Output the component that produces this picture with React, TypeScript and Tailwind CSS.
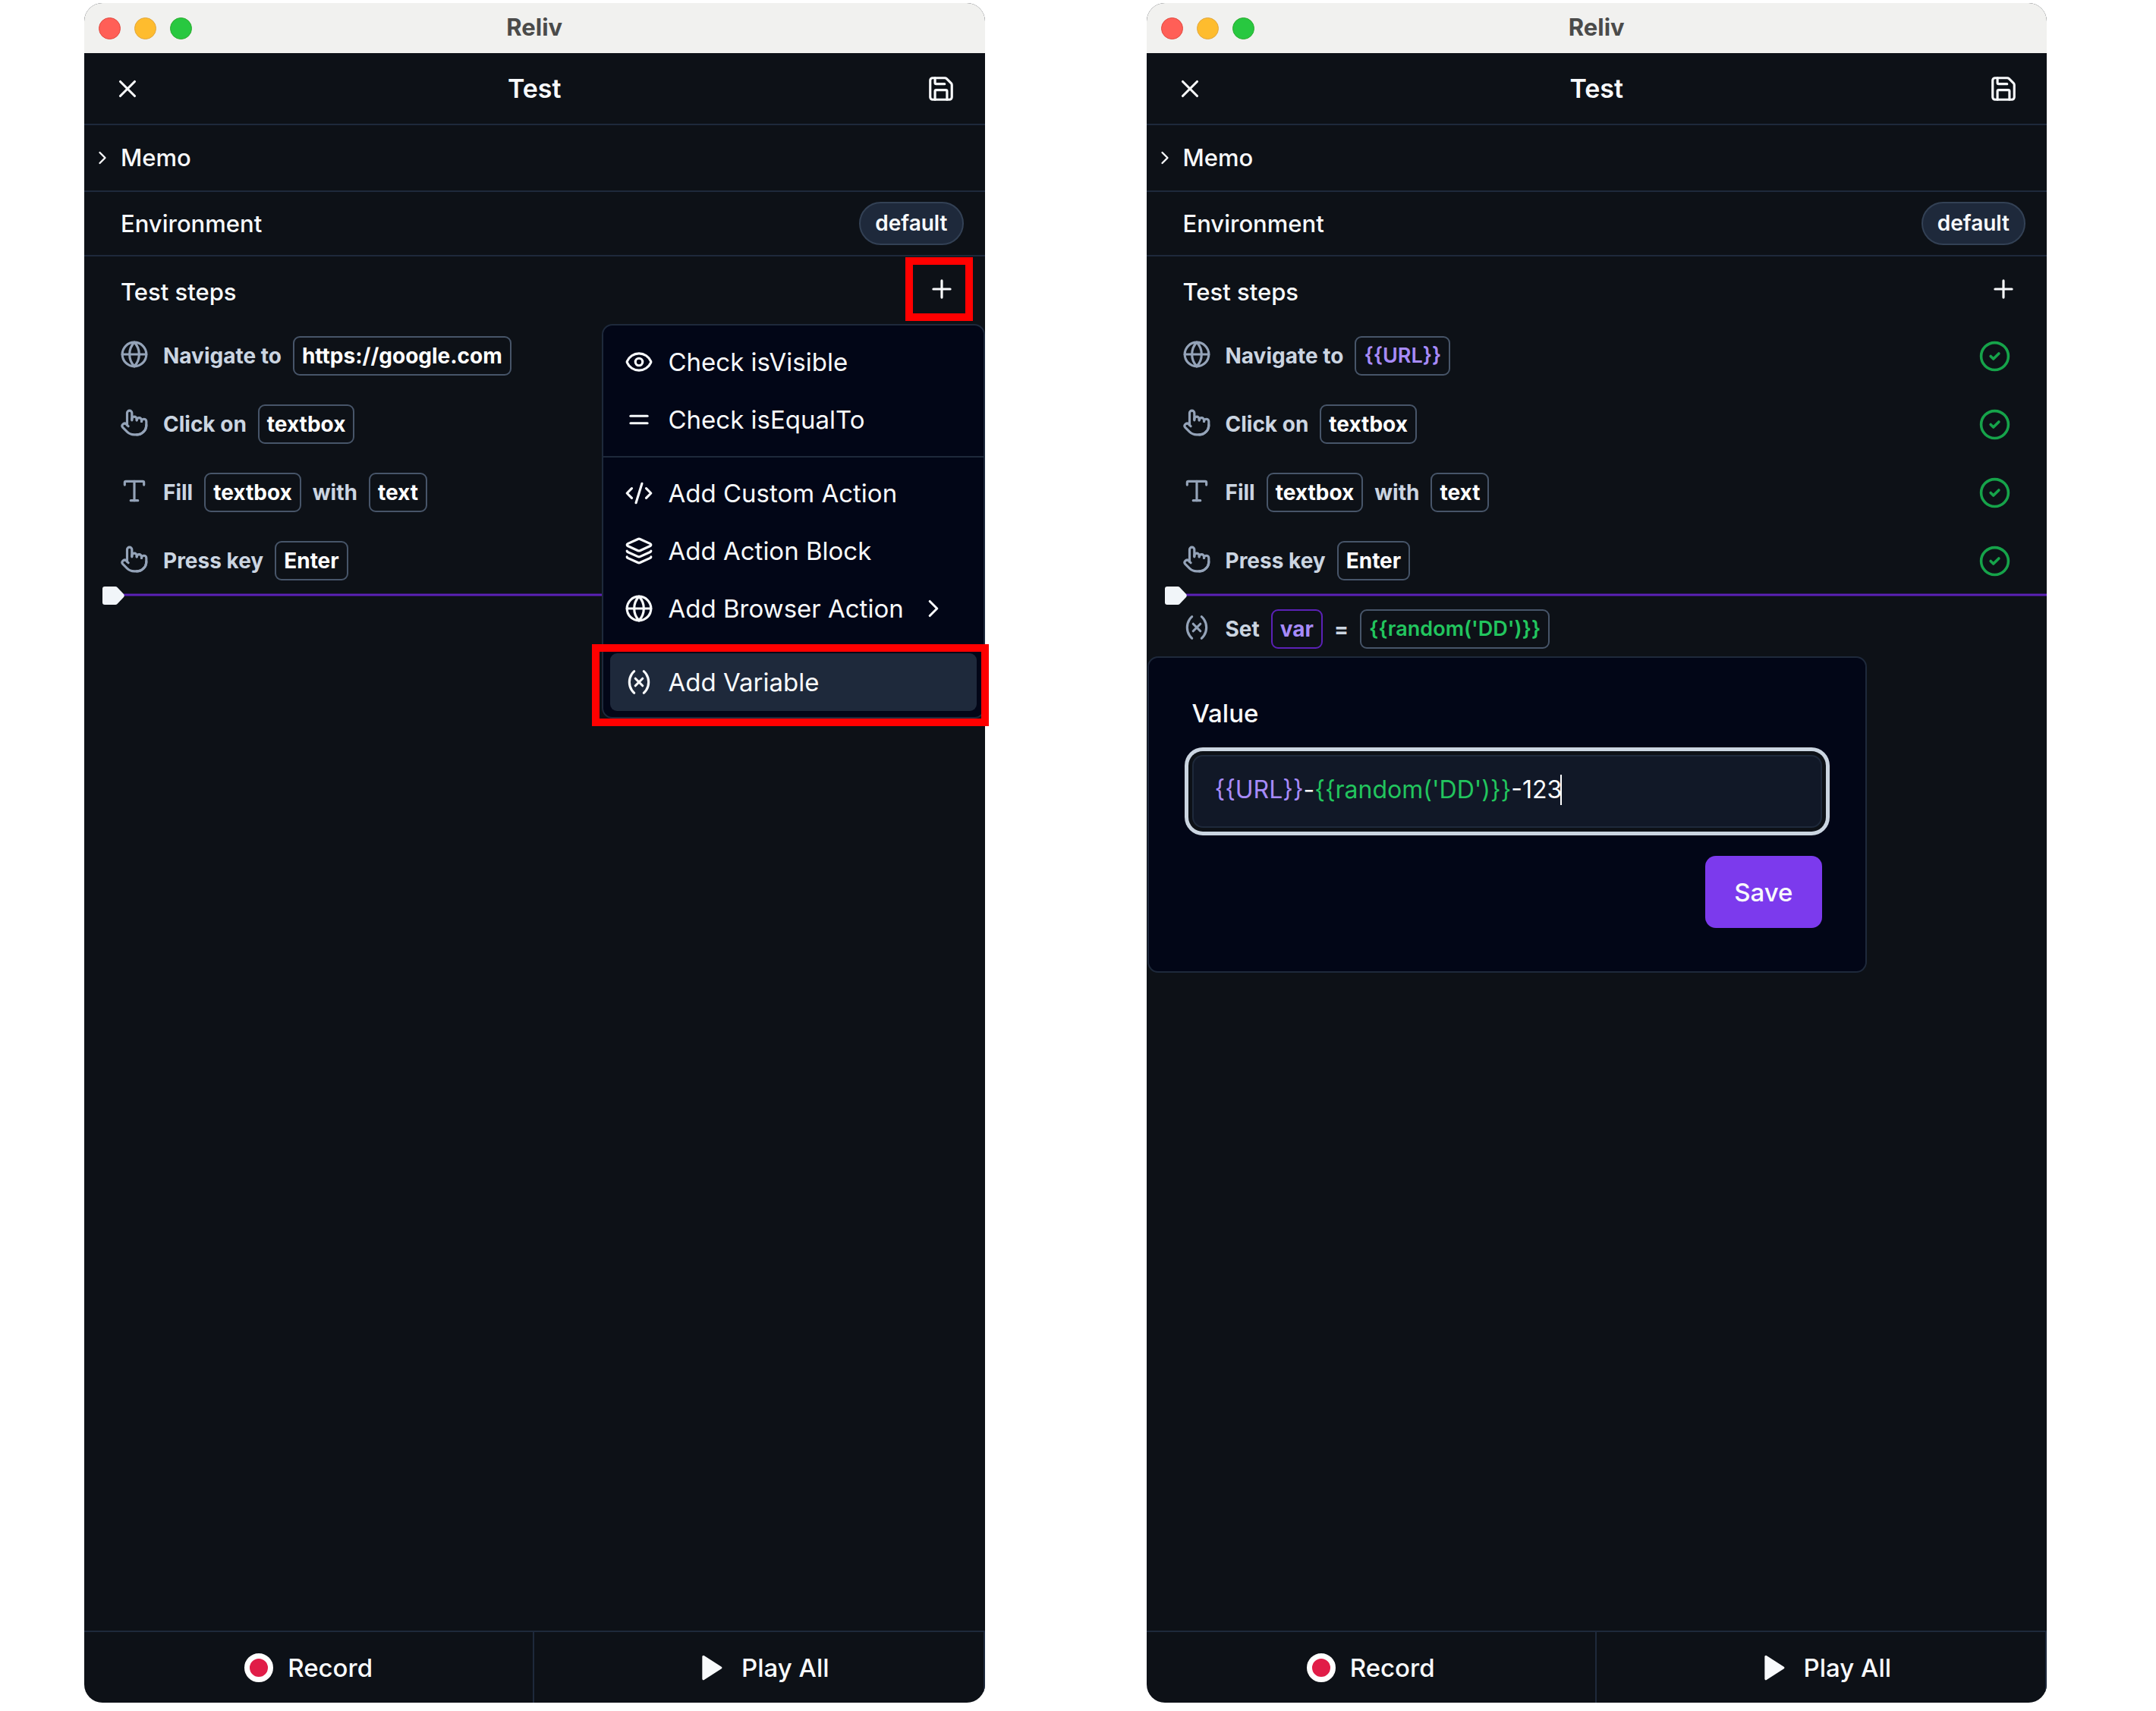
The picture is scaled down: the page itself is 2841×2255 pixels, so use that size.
import React, { useState } from "react";
import {
  X,
  Save,
  ChevronRight,
  Plus,
  Globe,
  Pointer,
  Type,
  Variable,
  CircleCheck,
  Eye,
  Equal,
  CodeXml,
  Layers,
} from "lucide-react";

const ICON = "size-[38px] shrink-0";

function TitleBar() {
  return (
    <div className="relative flex h-[66px] items-center justify-center rounded-t-[24px] bg-[#f1f1ef] pb-0.5">
      <div className="absolute inset-y-0 left-[19px] flex items-center gap-[18px]">
        <span className="size-[29px] rounded-full border border-[#e24b41] bg-[#ff5f57]" />
        <span className="size-[29px] rounded-full border border-[#e1a73e] bg-[#febc2e]" />
        <span className="size-[29px] rounded-full border border-[#2dac2f] bg-[#28c840]" />
      </div>
      <span className="text-[31px] leading-[40px] font-bold text-[#4b4b4a]">Reliv</span>
    </div>
  );
}

function Header() {
  return (
    <header className="flex h-[95px] items-center justify-between border-b-2 border-[#1e293b] px-[38px]">
      <button type="button" aria-label="Close">
        <X className={ICON} />
      </button>
      <h1 className="text-[34px] leading-[48px] font-semibold">Test</h1>
      <button type="button" aria-label="Save test">
        <Save className={ICON} />
      </button>
    </header>
  );
}

const PLAIN_CHIP = "border-[#475569] text-[28px] font-bold text-white";

function Chip({ children, className = PLAIN_CHIP }: { children: React.ReactNode; className?: string }) {
  return (
    <button type="button" className={"h-[52px] rounded-[9px] border-2 px-[10px] leading-[40px] " + className}>
      {children}
    </button>
  );
}

function Step({ icon, children, passed }: { icon: React.ReactNode; children: React.ReactNode; passed?: boolean }) {
  return (
    <li className="flex h-[90px] items-center px-[47px] text-[#cbd5e1]">
      <span className="mr-[19px] mb-1 text-[#94a3b8]">{icon}</span>
      <div className="flex items-center gap-[15px] text-[28px] leading-[40px] font-bold">{children}</div>
      {passed && <CircleCheck aria-label="Passed" className="ml-auto size-[43px] text-[#16a34a]" />}
    </li>
  );
}

function Marker() {
  return (
    <div className="relative h-0">
      <div className="absolute right-0 left-[40px] h-[3px] -translate-y-1/2 bg-[#5b21b6]" />
      <svg className="absolute top-[-11px] left-[24px] h-[24px] w-[29px] text-[#f1f5f9]" viewBox="0 0 29 24" fill="currentColor">
        <path d="M3 0h14q1.500 0 2.500 1l8.500 9q1.500 2 0 4l-8.500 9Q18.500 24 17 24H3q-3 0-3-3V3q0-3 3-3z" />
      </svg>
    </div>
  );
}

function Steps({ url, passed, children }: { url: React.ReactNode; passed?: boolean; children?: React.ReactNode }) {
  return (
    <ul>
      <Step passed={passed} icon={<Globe className={ICON} />}>
        <span>Navigate to</span>
        {url}
      </Step>
      <Step passed={passed} icon={<Pointer className={ICON} />}>
        <span>Click on</span>
        <Chip>textbox</Chip>
      </Step>
      <Step passed={passed} icon={<Type className={ICON} />}>
        <span>Fill</span>
        <Chip>textbox</Chip>
        <span>with</span>
        <Chip>text</Chip>
      </Step>
      <Step passed={passed} icon={<Pointer className={ICON} />}>
        <span>Press key</span>
        <Chip>Enter</Chip>
      </Step>
      <li>
        <Marker />
      </li>
      {children}
    </ul>
  );
}

function MenuItem({ icon, label, active, more }: { icon: React.ReactNode; label: string; active?: boolean; more?: boolean }) {
  return (
    <button
      type="button"
      role="menuitem"
      className={"flex h-[76px] w-full items-center rounded-[9px] px-[19px] " + (active ? "bg-[#1e293b]" : "")}
    >
      {icon}
      <span className="ml-[20px] text-[33px] leading-[48px]">{label}</span>
      {more && <ChevronRight className={ICON + " ml-[20px]"} />}
    </button>
  );
}

function AddMenu() {
  return (
    <div
      role="menu"
      className="absolute top-[89px] right-0 w-[505px] rounded-[14px] border-2 border-[#1e293b] bg-[#020617] px-[9px] pt-[10px] pb-[8px]"
    >
      <MenuItem icon={<Eye className={ICON} />} label="Check isVisible" />
      <MenuItem icon={<Equal className={ICON} />} label="Check isEqualTo" />
      <hr className="-mx-[9px] mt-[10px] mb-[9px] border-t-2 border-[#1e293b]" />
      <MenuItem icon={<CodeXml className={ICON} />} label="Add Custom Action" />
      <MenuItem icon={<Layers className={ICON} />} label="Add Action Block" />
      <MenuItem icon={<Globe className={ICON} />} label="Add Browser Action" more />
      <hr className="-mx-[9px] mt-[10px] mb-[9px] border-t-2 border-[#1e293b]" />
      <MenuItem icon={<Variable className={ICON} />} label="Add Variable" active />
      <div className="pointer-events-none absolute right-[-7px] bottom-[-12px] left-[-15px] h-[108px] border-[10px] border-[#ff0000]" />
    </div>
  );
}

function ValueEditor() {
  const [value, setValue] = useState("{{URL}}-{{random('DD')}}-123");
  const parts = value.split(/(\{\{.*?\}\})/).filter(Boolean);
  return (
    <form className="absolute top-[527px] left-px w-[948px] rounded-[14px] border-2 border-[#1e293b] bg-[#020617] px-[57px] pt-[45px] pb-[57px]">
      <label htmlFor="variable-value" className="block text-[33px] leading-[56px] font-medium">
        Value
      </label>
      <div className="mt-[27px] grid h-[96px] items-center rounded-[14px] border-2 border-[#1e293b] bg-[#111827] text-[32px] leading-[40px] ring-[5px] ring-[#cbd5e1] ring-offset-[5px] ring-offset-[#0d1117]">
        <div aria-hidden="true" className="col-start-1 row-start-1 flex px-[28px] pb-1 whitespace-pre">
          {parts.map((part, i) => (
            <span
              key={i}
              className={part.startsWith("{{random") ? "text-[#22c55e]" : part.startsWith("{{") ? "text-[#a78bfa]" : "text-white"}
            >
              {part}
            </span>
          ))}
          <span className="-ml-0.5 w-0.5 bg-white" />
        </div>
        <input
          id="variable-value"
          type="text"
          value={value}
          onChange={(e) => setValue(e.target.value)}
          className="col-start-1 row-start-1 w-full bg-transparent px-[28px] pb-1 text-transparent caret-transparent outline-none"
        />
      </div>
      <div className="mt-[37px] flex justify-end">
        <button type="button" className="h-[95px] rounded-[14px] bg-[#7c3aed] px-[38px] text-[33px] leading-[48px] font-medium">
          Save
        </button>
      </div>
    </form>
  );
}

function Footer() {
  return (
    <footer className="mt-auto grid h-[95px] grid-cols-2 overflow-hidden rounded-b-[24px] border-t-2 border-[#1e293b] text-[33px] leading-[48px] font-medium">
      <button type="button" className="flex items-center justify-center gap-[19px] border-r-2 border-[#1e293b]">
        <span className="size-[38px] rounded-full border-[7px] border-white bg-[#e11d48]" />
        Record
      </button>
      <button type="button" className="flex items-center justify-center gap-[20px] border-r-2 border-[#1e293b] pl-[12px]">
        <svg className={ICON} viewBox="0 0 24 24" fill="currentColor" stroke="currentColor" strokeWidth="2" strokeLinejoin="round">
          <polygon points="5 2.700 19.500 12 5 21.300" />
        </svg>
        Play All
      </button>
    </footer>
  );
}

function AppWindow({ children, highlightAdd }: { children: React.ReactNode; highlightAdd?: boolean }) {
  return (
    <section className="flex flex-1 flex-col rounded-[24px] bg-[#0d1117] text-[#f8fafc]">
      <TitleBar />
      <Header />
      <button
        type="button"
        className="flex h-[88px] items-center gap-[10px] border-b-2 border-[#1e293b] pl-[10px] text-[31px] leading-[40px] font-medium"
      >
        <ChevronRight className="size-[28px]" />
        Memo
      </button>
      <div className="flex h-[85px] items-center justify-between border-b-2 border-[#1e293b] pr-[28px] pl-[48px] text-[31px] leading-[40px] font-medium">
        <span>Environment</span>
        <button
          type="button"
          className="h-[57px] rounded-full border-2 border-[#334155] bg-[#1e293b] px-[19px] pb-0.5 text-[28px] leading-[40px] font-semibold"
        >
          default
        </button>
      </div>
      <div className="relative flex flex-col">
        <div className="flex h-[86px] items-center justify-between pr-[38px] pl-[48px]">
          <h2 className="pt-2 text-[31px] leading-[40px] font-medium">Test steps</h2>
          <button type="button" aria-label="Add step" className="relative">
            <Plus className={ICON} />
            {highlightAdd && (
              <span className="absolute -inset-y-[23px] -right-[22px] -left-[29px] border-[10px] border-[#ff0000]" />
            )}
          </button>
        </div>
        {children}
      </div>
      <Footer />
    </section>
  );
}

export default function App() {
  return (
    <main className="flex min-h-screen gap-[213px] bg-white pt-[4px] pr-[144px] pb-[11px] pl-[111px] font-['Inter',sans-serif]">
      <AppWindow highlightAdd>
        <Steps url={<Chip>https://google.com</Chip>} />
        <AddMenu />
      </AppWindow>
      <AppWindow>
        <Steps
          passed
          url={<Chip className="border-[#475569] text-[27px] font-semibold text-[#a78bfa]">{"{{URL}}"}</Chip>}
        >
          <Step icon={<Variable className={ICON} />}>
            <span>Set</span>
            <Chip className="border-[#5b21b6] text-[28px] font-bold text-[#a78bfa]">var</Chip>
            <span>=</span>
            <Chip className="border-[#475569] text-[27px] font-semibold text-[#22c55e]">{"{{random('DD')}}"}</Chip>
          </Step>
        </Steps>
        <ValueEditor />
      </AppWindow>
    </main>
  );
}
